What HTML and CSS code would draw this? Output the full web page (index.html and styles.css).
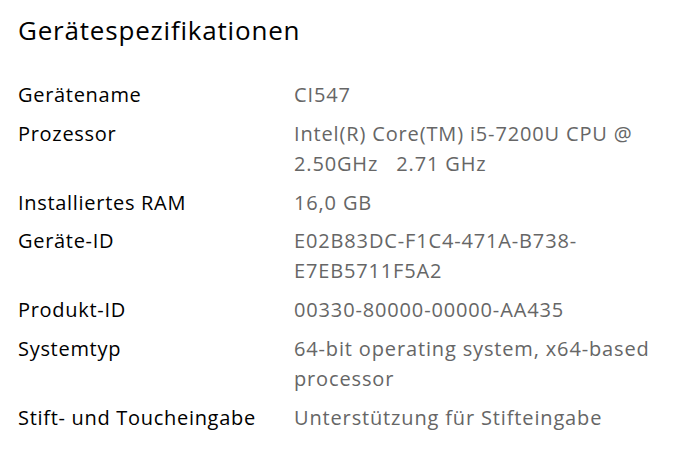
FILE: index.html
```html
<!DOCTYPE html>
<html lang="de">
<head>
<meta charset="utf-8">
<title>Gerätespezifikationen</title>
<link rel="stylesheet" href="styles.css">
</head>
<body>
<main class="page">
  <h1 class="title">Gerätespezifikationen</h1>
  <dl class="specs">
    <div class="row"><dt>Gerätename</dt><dd>CI547</dd></div>
    <div class="row"><dt>Prozessor</dt><dd>Intel(R) Core(TM) i5-7200U CPU @ 2.50GHz&nbsp;&nbsp; 2.71 GHz</dd></div>
    <div class="row"><dt>Installiertes RAM</dt><dd>16,0 GB</dd></div>
    <div class="row"><dt>Geräte-ID</dt><dd>E02B83DC-F1C4-471A-B738-E7EB5711F5A2</dd></div>
    <div class="row"><dt>Produkt-ID</dt><dd>00330-80000-00000-AA435</dd></div>
    <div class="row"><dt>Systemtyp</dt><dd>64-bit operating system, x64-based processor</dd></div>
    <div class="row"><dt>Stift- und Toucheingabe</dt><dd>Unterstützung für Stifteingabe</dd></div>
  </dl>
</main>
</body>
</html>
```
FILE: styles.css
```css
html, body {
  margin: 0;
  padding: 0;
  background: #ffffff;
}
.page {
  padding: 12px 0 0 18px;
  font-family: "Open Sans", "Noto Sans", "Liberation Sans", sans-serif;
  color: #000000;
}
.title {
  margin: 0;
  font-size: 26px;
  font-weight: 400;
  letter-spacing: 0.8px;
  line-height: 36px;
}
.specs {
  margin: 32px 0 0 0;
  display: flex;
  flex-direction: column;
  gap: 8.8px;
}
.row {
  display: grid;
  grid-template-columns: 276px 380px;
}
dt, dd {
  margin: 0;
  font-size: 20px;
  letter-spacing: 0.7px;
  line-height: 30px;
}
dd {
  color: #666666;
  letter-spacing: 0.85px;
}
```
